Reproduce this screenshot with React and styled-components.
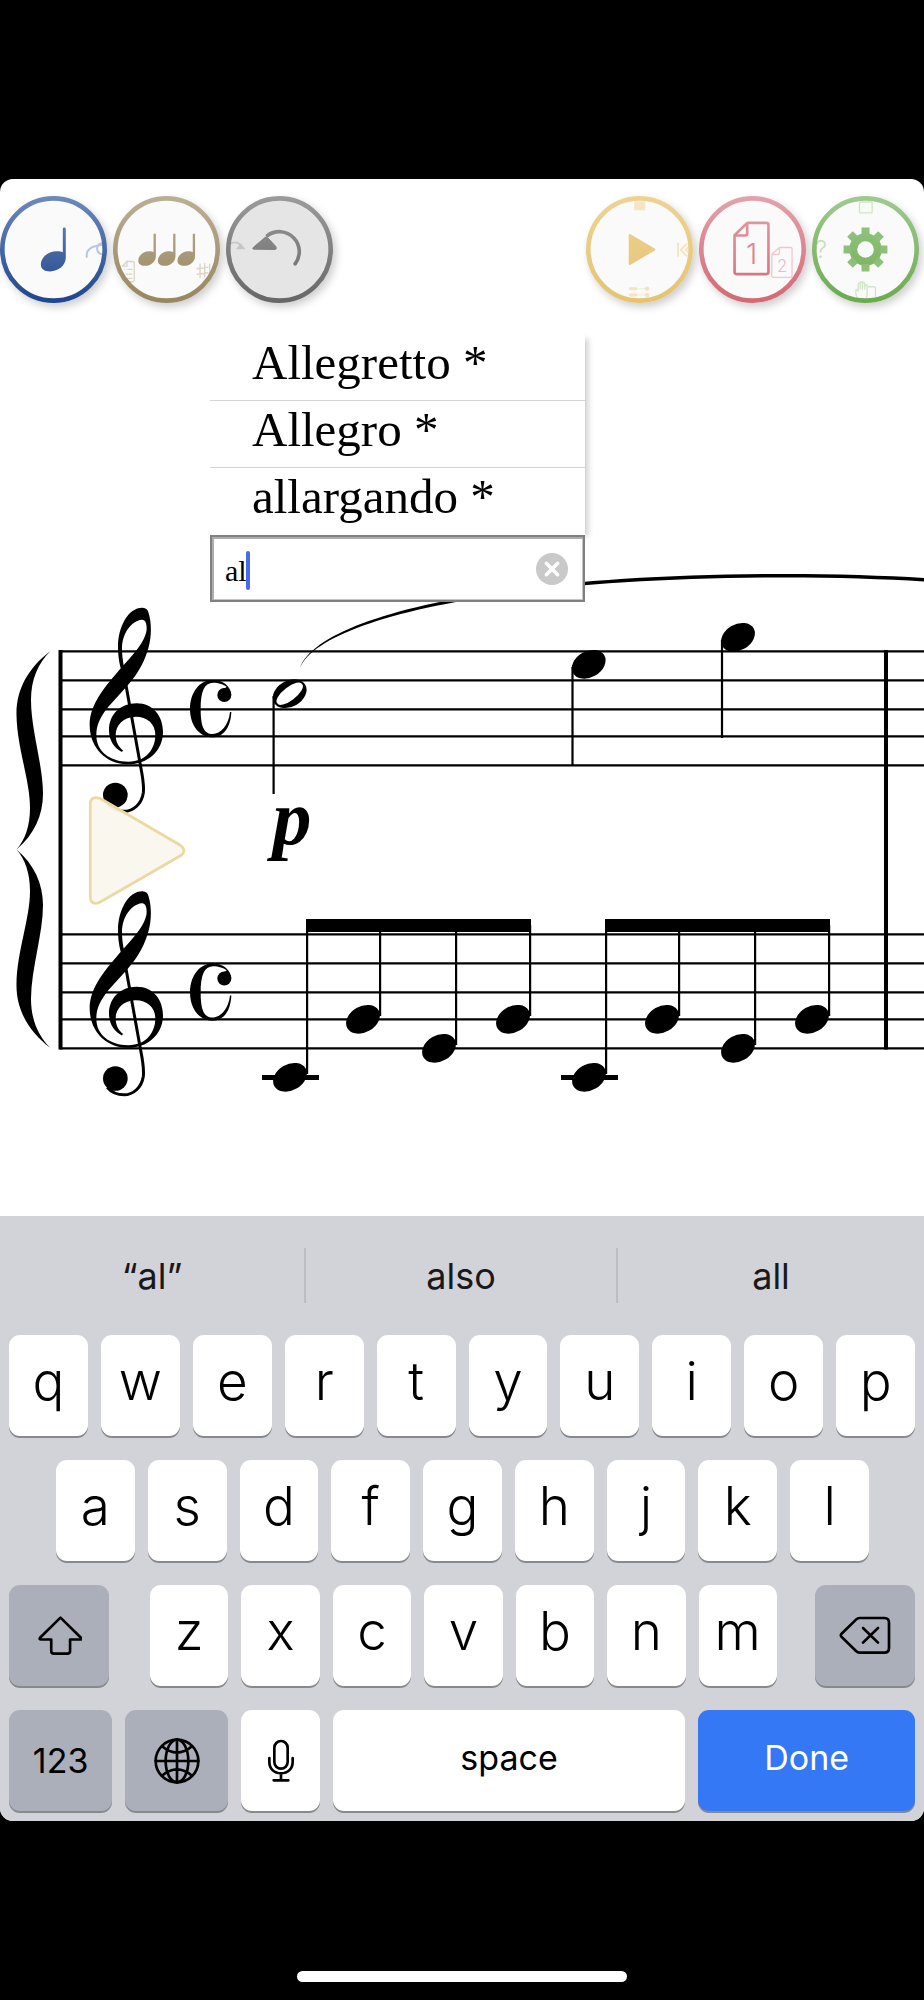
import React, { useId, useState } from "react";
import styled, { createGlobalStyle } from "styled-components";

const SUGGESTIONS = ["Allegretto *", "Allegro *", "allargando *"];
const PREDICTIONS = ["“al”", "also", "all"];
const TOP_ROW = "qwertyuiop".split("");
const HOME_ROW = "asdfghjkl".split("");
const BOTTOM_ROW = "zxcvbnm".split("");

const UPPER_STAFF = [651, 680, 709, 736, 765];
const LOWER_STAFF = [934, 963, 992, 1019, 1048];
const BEAM_GROUPS = [306, 605];
const BEAM_NOTES = [
    { x: 0, y: 1077 },
    { x: 73, y: 1019 },
    { x: 149, y: 1048 },
    { x: 223, y: 1019 },
];

const App = () => {
    const [text, setText] = useState("al");
    const type = (letter) => setText(text + letter);

    return (
        <Page>
            <GlobalStyle />
            <Screen>
                <Toolbar>
                    <Group>
                        <Tool label="Notes" from="#6c8aba" to="#1f458c">
                            {(paint) => <NoteIcon paint={paint} />}
                        </Tool>
                        <Tool label="Rhythm" from="#bbb094" to="#97865f">
                            {(paint) => <RhythmIcon paint={paint} />}
                        </Tool>
                        <Tool label="Undo" from="#9b9b9b" to="#666" fill="#e5e5e5">
                            {(paint) => <UndoIcon paint={paint} />}
                        </Tool>
                    </Group>
                    <Group>
                        <Tool label="Play" from="#edd394" to="#e6c372">
                            {(paint) => <PlayIcon paint={paint} />}
                        </Tool>
                        <Tool label="Pages" from="#e3a3ac" to="#d46775">
                            {(paint) => <PagesIcon paint={paint} />}
                        </Tool>
                        <Tool label="Settings" from="#a0ca90" to="#6aab4d">
                            {(paint) => <GearIcon paint={paint} />}
                        </Tool>
                    </Group>
                </Toolbar>

                <Canvas>
                    <Score />
                    <StartButton type="button" aria-label="Play from here">
                        <svg viewBox="88 795 98 111" width="98" height="111">
                            <path
                                d="M90.3 804Q90.3 797.7 96 797.7Q99 797.7 102 799.5L180 845Q184 848 184 850.5Q184 853.5 180 856L102 901Q98 903.5 96 903.5Q90.3 903.5 90.3 897Z"
                                fill="#faf7ee"
                                fillOpacity="0.96"
                                stroke="#ecd8a3"
                                strokeWidth="2.7"
                            />
                        </svg>
                    </StartButton>
                    <Popup>
                        <List>
                            {SUGGESTIONS.map((item) => (
                                <Item key={item}>
                                    <ItemButton type="button">{item}</ItemButton>
                                </Item>
                            ))}
                        </List>
                        <Field>
                            <Input
                                aria-label="Tempo text"
                                value={text}
                                onChange={(e) => setText(e.target.value)}
                            />
                            <Caret />
                            <Clear
                                type="button"
                                aria-label="Clear text"
                                onClick={() => setText("")}
                            >
                                <svg viewBox="0 0 32 32" width="32" height="32">
                                    <circle cx="16" cy="16" r="16" fill="#c9c9c9" />
                                    <path
                                        d="M10.3 10.3L21.7 21.7M21.7 10.3L10.3 21.7"
                                        stroke="#fff"
                                        strokeWidth="3.4"
                                        strokeLinecap="round"
                                    />
                                </svg>
                            </Clear>
                        </Field>
                    </Popup>
                </Canvas>

                <Keyboard>
                    <Predictions>
                        {PREDICTIONS.map((word) => (
                            <Prediction key={word} type="button">
                                {word}
                            </Prediction>
                        ))}
                    </Predictions>
                    <Keys>
                        <KeyRow>
                            <Letters letters={TOP_ROW} onType={type} />
                        </KeyRow>
                        <KeyRow $inset>
                            <Letters letters={HOME_ROW} onType={type} />
                        </KeyRow>
                        <KeyRow>
                            <SideKey type="button" aria-label="Shift">
                                <ShiftIcon />
                            </SideKey>
                            <Middle>
                                <Letters letters={BOTTOM_ROW} onType={type} />
                            </Middle>
                            <SideKey
                                type="button"
                                aria-label="Delete"
                                onClick={() => setText(text.slice(0, -1))}
                            >
                                <DeleteIcon />
                            </SideKey>
                        </KeyRow>
                        <KeyRow>
                            <DarkKey type="button" $grow={103}>
                                123
                            </DarkKey>
                            <DarkKey type="button" $grow={103} aria-label="Next keyboard">
                                <GlobeIcon />
                            </DarkKey>
                            <WordKey type="button" $grow={78} aria-label="Dictate">
                                <MicIcon />
                            </WordKey>
                            <WordKey type="button" $grow={352} onClick={() => type(" ")}>
                                space
                            </WordKey>
                            <DoneKey type="button" $grow={216}>
                                Done
                            </DoneKey>
                        </KeyRow>
                    </Keys>
                </Keyboard>
            </Screen>
            <Footer>
                <HomeBar />
            </Footer>
        </Page>
    );
};

export default App;

const Letters = ({ letters, onType }) =>
    letters.map((letter) => (
        <Key key={letter} type="button" onClick={() => onType(letter)}>
            {letter}
        </Key>
    ));

// Round toolbar button. Icons are drawn around the centre of the circle.
const Tool = ({ label, from, to, fill = "#fafafa", children }) => {
    const id = useId();
    return (
        <ToolButton type="button" aria-label={label}>
            <ToolArt viewBox="-161 -161 322 322">
                <defs>
                    <linearGradient
                        id={`${id}g`}
                        gradientUnits="userSpaceOnUse"
                        x1="0"
                        y1="-160"
                        x2="0"
                        y2="160"
                    >
                        <stop offset="0" stopColor={from} />
                        <stop offset="1" stopColor={to} />
                    </linearGradient>
                    <clipPath id={`${id}c`}>
                        <circle r="150" />
                    </clipPath>
                </defs>
                <circle r="155" fill={fill} />
                <g clipPath={`url(#${id}c)`}>{children(`url(#${id}g)`)}</g>
                <circle r="154" fill="none" stroke={`url(#${id}g)`} strokeWidth="14" />
            </ToolArt>
        </ToolButton>
    );
};

const NoteIcon = ({ paint }) => (
    <>
        <path
            d="M28 -62Q28 -66 32.5 -66Q37 -66 37 -62V25C37 48 14 66 -10 66C-28 66 -38 58 -38 45C-38 24 -16 5 10 5C18 5 24 6 28 8Z"
            fill={paint}
        />
        <g fill="none" stroke="#b9c6de" strokeWidth="6" strokeLinecap="round">
            <path d="M100 22C98 0 112 -10 150 -14" />
            <path d="M144 -19C126 -14 126 14 152 15" />
        </g>
    </>
);

const RhythmIcon = ({ paint }) => (
    <>
        <g fill={paint}>
            {[-59, 0, 59].map((x) => (
                <path
                    key={x}
                    transform={`translate(${x} 0)`}
                    d="M20 -46Q20 -48 23.5 -48Q27 -48 27 -46V20C27 36 12 49 -6 49C-19 49 -26 43 -26 34C-26 18 -10 5 7 5C13 5 17 6 20 8Z"
                />
            ))}
        </g>
        <g fill="none" stroke="#dbd5c4" strokeWidth="4" strokeLinecap="round">
            <path d="M-119 36H-102Q-97 36 -97 41V92Q-97 97 -102 97H-130M-133 50L-119 36V50H-133" />
            <path d="M-126 60V60M-116 60H-104M-122 74H-104M-118 87H-104" />
            <path d="M101 44V85M115 42V83M92 58L125 53M92 75L125 70" />
            <path d="M130 44V82C142 76 146 64 130 64" />
        </g>
    </>
);

const UndoIcon = ({ paint }) => (
    <>
        <path
            d="M-36 -42A60 60 0 0 1 47 43"
            fill="none"
            stroke={paint}
            strokeWidth="11"
            strokeLinecap="round"
        />
        <path
            d="M-79 -6L-44 -36Q-40 -40 -35 -35L-11 -9Q-7 0 -14 0L-77 -1Q-83 -2 -79 -6Z"
            fill={paint}
            stroke={paint}
            strokeWidth="3"
        />
        <path d="M-148 -17Q-128 -28 -116 -12" fill="none" stroke="#c6c6c6" strokeWidth="5" />
        <path d="M-131 -1L-117 -19L-102 -1Z" fill="#c6c6c6" />
    </>
);

const PlayIcon = ({ paint }) => (
    <>
        <path
            d="M-29 -43L44 0L-29 43Z"
            fill={paint}
            stroke={paint}
            strokeWidth="7"
            strokeLinejoin="round"
        />
        <rect x="-16" y="-145" width="33" height="27" fill="#f4e6c5" />
        <g fill="none" stroke="#f4e3bb" strokeWidth="5">
            <path d="M116 -20V22M143 -18L124 1L143 20M158 -18L139 1L158 20" />
            <path d="M-6 118H18M-6 137H18" strokeWidth="2" />
            <path d="M-27 118H-11M-27 137H-11" strokeWidth="9" strokeLinecap="round" />
        </g>
        <circle cx="23" cy="118" r="7" fill="#f4e3bb" />
        <circle cx="23" cy="137" r="7" fill="#f4e3bb" />
    </>
);

const PagesIcon = ({ paint }) => (
    <>
        <path
            d="M-16 -80H42Q48 -80 48 -74V68Q48 74 42 74H-48Q-54 74 -54 68V-43L-16 -80V-48Q-16 -42 -22 -42H-53"
            fill="none"
            stroke={paint}
            strokeWidth="8"
            strokeLinejoin="round"
        />
        <PageDigit x="-3" y="44" fontSize="86" fill={paint}>
            1
        </PageDigit>
        <path
            d="M81 -6H115Q119 -6 119 -2V80Q119 84 115 84H62Q58 84 58 80V14L81 -6V11Q81 15 77 15H58"
            fill="#fafafa"
            stroke="#efc8ce"
            strokeWidth="4"
            strokeLinejoin="round"
        />
        <PageDigit x="89" y="67" fontSize="50" fill="#eabac1">
            2
        </PageDigit>
    </>
);

const GearIcon = ({ paint }) => (
    <>
        <circle r="37" fill="none" stroke={paint} strokeWidth="24" />
        <g fill={paint}>
            {[0, 45, 90, 135, 180, 225, 270, 315].map((turn) => (
                <path key={turn} d="M-12 -44V-66H12V-44Z" transform={`rotate(${turn})`} />
            ))}
        </g>
        <g fill="none" stroke="#d0e6c6" strokeWidth="4" strokeLinejoin="round">
            <rect x="-18" y="-143" width="38" height="33" rx="3" />
            <path d="M7 112H26Q30 112 30 116V150" />
            <path d="M-23 150C-28 140 -31 130 -29 122Q-25 118 -22 126V104Q-19 98 -16 104V100Q-12 94 -9 100V101Q-5 96 -2 102V108Q3 104 5 110V132Q5 144 0 150" />
            <path d="M-16 102V120M-9 100V120M-2 103V120" />
        </g>
        <Hint x="-134" y="27" fill="#c5e0b9">
            ?
        </Hint>
    </>
);

const Clef = () => (
    <>
        <circle cx="346" cy="615" r="37" />
        <path
            d="M368 230L422 530C429 565 432 590 430 608C425 642 400 664 372 664C352 664 336 658 322 642"
            fill="none"
            stroke="#000"
            strokeWidth="9"
        />
        <path d="M354 170C354 110 385 52 428 53Q443 54 446 70C455 100 455 140 445 175C430 230 400 268 378 292L325 350C300 382 289 405 289 435C289 485 330 515 385 515C440 515 466 475 466 435C466 400 440 380 408 380C370 380 347 405 347 435C347 458 358 472 369 481L366 486C345 475 327 455 327 420C327 375 360 340 410 340C460 340 489 380 489 425C489 485 440 523 385 523C315 523 269 470 269 405C269 340 320 285 365 232C400 195 440 150 440 115C440 100 436 88 425 89C395 92 366 130 366 175C366 195 368 210 372 232L362 235C356 210 354 190 354 170Z" />
    </>
);

const CommonTime = () => (
    <>
        <circle cx="673" cy="315" r="21" />
        <path d="M694 366C692 415 668 442 638 442C598 442 570 405 570 357C570 308 598 270 638 270C668 270 692 288 694 314L668 296Q677 294 680 290C672 283 655 278 640 278C612 278 602 305 602 357C602 410 612 432 638 432C662 432 686 405 690 366Z" />
    </>
);

const NoteHead = ({ x, y }) => (
    <ellipse cx={x} cy={y} rx="18" ry="13" transform={`rotate(-30 ${x} ${y})`} />
);

const BraceHalf = () => (
    <path d="M50.5 651C28 668 16 690 16.5 715C17 748 30 780 30 808C30 826 25 840 16.5 849.5C34 835 43 815 43 794C43 765 31 730 31 700C31 680 38 663 50.5 651Z" />
);

const Score = () => (
    <ScoreArt viewBox="0 304 924 912" role="img" aria-label="Piano score">
        <g stroke="#000" strokeWidth="2.3">
            {[...UPPER_STAFF, ...LOWER_STAFF].map((y) => (
                <path key={y} d={`M60 ${y + 0.3}H924`} />
            ))}
        </g>
        <path d="M60.5 650V1049.5M886 650V1049.5" stroke="#000" strokeWidth="4" />
        <BraceHalf />
        <g transform="translate(0 1699) scale(1 -1)">
            <BraceHalf />
        </g>

        {[590, 873.5].map((y) => (
            <g key={y} transform={`translate(0 ${y}) scale(0.33333)`}>
                <Clef />
                <CommonTime />
            </g>
        ))}

        <path d="M300 668C318 618 490 574 785 574C835 574 885 575.5 924 578V581.5C885 579 835 577.5 785 577.5C500 577.5 320 619 300 668Z" />

        <g>
            <path
                fillRule="evenodd"
                transform="rotate(-30 289.7 693.7)"
                d="M271.7 693.7a18 13 0 1 0 36 0a18 13 0 1 0 -36 0ZM274.2 695.7a15.7 6 -8 1 0 31 -4a15.7 6 -8 1 0 -31 4Z"
            />
            <NoteHead x={588.7} y={664.3} />
            <NoteHead x={738} y={637.3} />
            <path
                d="M273.6 696V794M572.5 667V765M722 640V738"
                stroke="#000"
                strokeWidth="2.2"
            />
        </g>
        <Dynamic x="292" y="844">
            p
        </Dynamic>

        {BEAM_GROUPS.map((start) => (
            <g key={start} transform={`translate(${start} 0)`}>
                <rect x="0" y="919" width="225" height="13" />
                <rect x="-44" y="1075" width="57" height="5" />
                {BEAM_NOTES.map(({ x, y }) => (
                    <g key={x}>
                        <NoteHead x={x - 16} y={y + 0.3} />
                        <rect x={x} y="925" width="2.2" height={y - 928} />
                    </g>
                ))}
            </g>
        ))}
    </ScoreArt>
);

const ShiftIcon = () => (
    <KeyIcon viewBox="112 140 134 118" width="45" height="39">
        <path d="M182 145L120 206Q117 211 123 211H154V246Q154 254 162 254H203Q211 254 211 246V211H242Q248 211 244 206Z" />
    </KeyIcon>
);

const DeleteIcon = () => (
    <KeyIcon viewBox="1132 140 156 117" width="52" height="39">
        <path d="M1194 146H1268Q1282 146 1282 160V236Q1282 250 1268 250H1194Q1188 250 1183 245L1139 202Q1136 198 1139 194L1183 151Q1188 146 1194 146Z" />
        <path d="M1204 176L1249 220M1249 176L1204 220" />
    </KeyIcon>
);

const GlobeIcon = () => (
    <KeyIcon viewBox="-69 -69 138 138" width="46" height="46">
        <circle r="64" />
        <ellipse rx="34" ry="64" />
        <path d="M0 -64V64M-64 0H64M-45 -44Q0 -6 45 -44M-45 44Q0 6 45 44" />
    </KeyIcon>
);

const MicIcon = () => (
    <KeyIcon viewBox="801 508 84 132" width="28" height="44">
        <rect x="823" y="514" width="40" height="83" rx="20" />
        <path d="M808 565V576C808 597 822 611 843 611C864 611 878 597 878 576V565M843 611V632M821 632H865" />
    </KeyIcon>
);

const GlobalStyle = createGlobalStyle`
    * {
        box-sizing: border-box;
    }

    body {
        margin: 0;
        background: #000;
    }

    button {
        margin: 0;
        padding: 0;
        border: none;
        background: none;
        color: inherit;
        font: inherit;
        cursor: pointer;
    }
`;

const Page = styled.div`
    display: flex;
    flex-direction: column;
    min-height: 100vh;
    padding-top: 179px;
    background: #000;
    font-family: Inter, "Liberation Sans", sans-serif;
`;

const Screen = styled.main`
    border-radius: 13px;
    overflow: hidden;
    background: #fff;
`;

const Toolbar = styled.header`
    display: flex;
    justify-content: space-between;
    padding: 17px 5px 1px 0;
`;

const Group = styled.div`
    display: flex;
    gap: 6px;
`;

const ToolButton = styled.button`
    width: 107px;
    height: 107px;
    border-radius: 50%;
    box-shadow: 3px 4px 8px rgba(0, 0, 0, 0.2);
`;

const ToolArt = styled.svg`
    display: block;
    width: 100%;
    height: 100%;
`;

const PageDigit = styled.text`
    font-family: Inter, "Liberation Sans", sans-serif;
    font-weight: 300;
    text-anchor: middle;
`;

const Hint = styled.text`
    font-family: Inter, "Liberation Sans", sans-serif;
    font-size: 72px;
    font-weight: 300;
    text-anchor: middle;
`;

const Canvas = styled.section`
    position: relative;
`;

const ScoreArt = styled.svg`
    display: block;
    width: 100%;
`;

const Dynamic = styled.text`
    font-family: "Liberation Serif", serif;
    font-size: 78px;
    font-weight: bold;
    font-style: italic;
    text-anchor: middle;
`;

const StartButton = styled.button`
    position: absolute;
    left: 88px;
    top: 491px;

    svg {
        display: block;
    }
`;

const Popup = styled.div`
    position: absolute;
    left: 210px;
    top: 30px;
    width: 375px;
    font-family: "Liberation Serif", serif;
`;

const List = styled.ul`
    margin: 0;
    padding: 0 0 1px;
    list-style: none;
    background: #fff;
    box-shadow: 5px 3px 6px -2px rgba(0, 0, 0, 0.2);
`;

const Item = styled.li`
    & + & {
        border-top: 1px solid #d4d4d4;
    }
`;

const ItemButton = styled.button`
    display: block;
    width: 100%;
    height: 66px;
    padding: 0 0 8px 42px;
    font-size: 49px;
    line-height: 58px;
    text-align: left;
`;

const Field = styled.div`
    position: relative;
    display: flex;
    align-items: center;
    height: 67px;
    padding: 0 15px 0 13px;
    border: 2px solid #808080;
    background: #fff;
    box-shadow: inset 2px 2px #adadad, inset -1px -1px #c4c4c4;
`;

const Input = styled.input`
    flex: 1;
    min-width: 0;
    padding: 4px 0 0;
    border: none;
    outline: none;
    background: none;
    color: #000;
    caret-color: #4b69ef;
    font-family: "Liberation Serif", serif;
    font-size: 30px;
`;

const Caret = styled.span`
    position: absolute;
    left: 34px;
    top: 14px;
    width: 4px;
    height: 39px;
    border-radius: 2px;
    background: #4b69ef;
`;

const Clear = styled.button`
    display: flex;
`;

const Keyboard = styled.section`
    background: #d2d3d8;
    padding-bottom: 10px;
`;

const Predictions = styled.div`
    display: grid;
    grid-template-columns: 304fr 312fr 308fr;
    padding: 32px 0;
`;

const Prediction = styled.button`
    height: 55px;
    color: #191919;
    font-size: 36px;

    & + & {
        border-left: 2px solid #bcbdc2;
    }
`;

const Keys = styled.div`
    display: flex;
    flex-direction: column;
    gap: 24px;
    padding: 0 9px;
`;

const KeyRow = styled.div`
    display: flex;
    gap: 13px;
    padding: 0 ${(props) => (props.$inset ? "46px 0 47px" : "0")};
`;

const Middle = styled.div`
    display: flex;
    flex: 1;
    gap: 13px;
    margin: 0 25px 0 28px;
`;

const Key = styled.button`
    display: flex;
    flex: ${(props) => props.$grow || 1} 1 0;
    align-items: center;
    justify-content: center;
    min-width: 0;
    height: 101px;
    padding-bottom: 10px;
    border-radius: 11px;
    background: #fff;
    box-shadow: 0 2px 0 #88898d;
    color: #000;
    font-size: 53px;
    font-weight: 300;
    line-height: 64px;
`;

const WordKey = styled(Key)`
    padding-bottom: 6px;
    font-size: 34px;
    font-weight: 400;

    svg {
        margin-top: 6px;
    }
`;

const DoneKey = styled(WordKey)`
    background: #3478f6;
    color: #fff;
`;

const DarkKey = styled(Key)`
    padding-bottom: 0;
    background: #abafba;
    font-size: 34px;
    font-weight: 400;
`;

const SideKey = styled(DarkKey)`
    flex: 0 0 100px;
`;

const KeyIcon = styled.svg`
    fill: none;
    stroke: #000;
    stroke-width: 8;
    stroke-linecap: round;
    stroke-linejoin: round;
`;

const Footer = styled.footer`
    display: flex;
    flex: 1;
    align-items: flex-end;
    justify-content: center;
    padding-bottom: 18px;
`;

const HomeBar = styled.div`
    width: 330px;
    height: 11px;
    border-radius: 6px;
    background: #fff;
`;
